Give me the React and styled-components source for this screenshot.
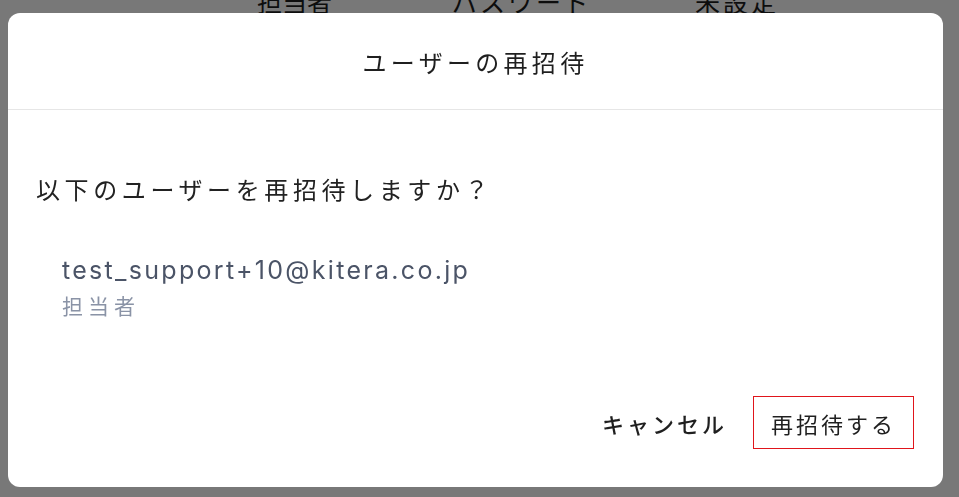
import React from 'react';
import styled, { createGlobalStyle } from 'styled-components';

const GlobalStyle = createGlobalStyle`
  html, body {
    margin: 0;
    padding: 0;
    background: #ffffff;
    font-family: "Noto Sans CJK JP", "Noto Sans", sans-serif;
  }
`;

const Page = styled.div`
  width: 959px;
  height: 497px;
  overflow: hidden;
`;

const BackRow = styled.div`
  display: flex;
  margin-top: -12px;
  padding-left: 257px;
  font-size: 25px;
  line-height: 26px;
  color: #1c1c1c;
`;

const BackCell = styled.span`
  width: ${(p) => p.$w}px;
  letter-spacing: ${(p) => p.$ls || 0}px;
`;

const Overlay = styled.div`
  position: fixed;
  inset: 0;
  background: rgba(0, 0, 0, 0.53);
  display: flex;
  padding: 13px 16px 10px 8px;
  box-sizing: border-box;
`;

const Dialog = styled.div`
  flex: 1;
  background: #ffffff;
  border-radius: 12px;
  display: flex;
  flex-direction: column;
  overflow: hidden;
`;

const Header = styled.div`
  height: 96px;
  display: flex;
  align-items: center;
  justify-content: center;
  border-bottom: 1px solid #e6e6e6;
  font-size: 24px;
  letter-spacing: 4.3px;
  color: #1f1f1f;
`;

const Body = styled.div`
  padding: 61px 28px 0;
`;

const Question = styled.p`
  margin: 0;
  font-size: 24px;
  line-height: 36px;
  letter-spacing: 4.6px;
  color: #222222;
`;

const UserBlock = styled.div`
  margin: 46px 0 0 26px;
`;

const Email = styled.div`
  font-family: "Inter", "Noto Sans CJK JP", sans-serif;
  font-size: 25px;
  line-height: 34px;
  letter-spacing: 2.3px;
  color: #4b5467;
`;

const Role = styled.div`
  font-size: 21px;
  line-height: 36px;
  letter-spacing: 5px;
  color: #8a93a6;
`;

const Footer = styled.div`
  margin-top: auto;
  display: flex;
  justify-content: flex-end;
  align-items: center;
  gap: 9px;
  padding: 0 29px 38px 0;
`;

const FooterButton = styled.button`
  height: 53px;
  padding: 0 ${(p) => (p.$primary ? '17px 0 17px' : '16px')};
  background: #ffffff;
  border: ${(p) => (p.$primary ? '1px solid #e0151b' : '1px solid transparent')};
  border-radius: 0;
  font-family: "Noto Sans CJK JP", sans-serif;
  font-size: 22px;
  font-weight: ${(p) => (p.$primary ? 400 : 500)};
  letter-spacing: 3px;
  color: #1f1f1f;
  cursor: pointer;
`;

const App = () => {
  return (
    <Page>
      <GlobalStyle />
      <BackRow>
        <BackCell $w={195}>担当者</BackCell>
        <BackCell $w={243} $ls={3}>パスワード</BackCell>
        <BackCell $w={100} $ls={3}>未設定</BackCell>
      </BackRow>
      <Overlay>
        <Dialog>
          <Header>ユーザーの再招待</Header>
          <Body>
            <Question>以下のユーザーを再招待しますか？</Question>
            <UserBlock>
              <Email>test_support+10@kitera.co.jp</Email>
              <Role>担当者</Role>
            </UserBlock>
          </Body>
          <Footer>
            <FooterButton>キャンセル</FooterButton>
            <FooterButton $primary>再招待する</FooterButton>
          </Footer>
        </Dialog>
      </Overlay>
    </Page>
  );
};

export default App;
